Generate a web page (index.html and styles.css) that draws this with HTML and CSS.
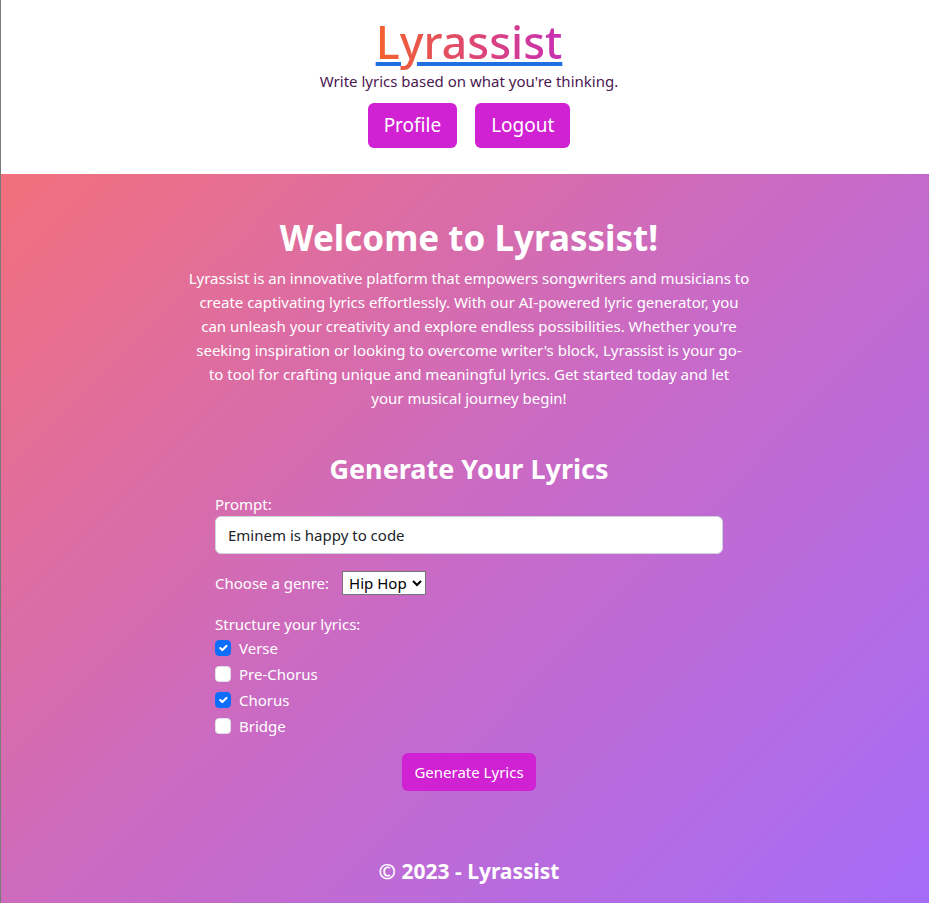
FILE: index.html
```html
<!DOCTYPE html>
<html lang="en">
<head>
<meta charset="utf-8">
<title>Lyrassist</title>
<link rel="stylesheet" href="styles.css">
</head>
<body>
<header class="site-header">
  <h1 class="logo"><a href="#" class="logo-link"><span class="logo-text">Lyrassist</span></a></h1>
  <p class="tagline">Write lyrics based on what you're thinking.</p>
  <nav class="nav">
    <a href="#" class="btn btn-lg">Profile</a>
    <a href="#" class="btn btn-lg">Logout</a>
  </nav>
</header>
<main class="hero">
  <section class="intro">
    <h2 class="intro-title">Welcome to Lyrassist!</h2>
    <p class="intro-text">Lyrassist is an innovative platform that empowers songwriters and musicians to<br>
create captivating lyrics effortlessly. With our AI-powered lyric generator, you<br>
can unleash your creativity and explore endless possibilities. Whether you're<br>
seeking inspiration or looking to overcome writer's block, Lyrassist is your go-<br>to tool for crafting unique and meaningful lyrics. Get started today and let<br>
your musical journey begin!</p>
  </section>
  <section class="generator">
    <h2 class="gen-title">Generate Your Lyrics</h2>
    <form class="gen-form">
      <label class="field-label" for="prompt">Prompt:</label>
      <input class="text-input" id="prompt" type="text" value="Eminem is happy to code">
      <div class="genre-row">
        <label for="genre">Choose a genre:</label>
        <select id="genre" class="genre-select">
          <option>Hip Hop</option>
          <option>Pop</option>
          <option>Rock</option>
        </select>
      </div>
      <div class="structure">
        <div class="structure-label">Structure your lyrics:</div>
        <label class="check"><input type="checkbox" checked><span>Verse</span></label>
        <label class="check"><input type="checkbox"><span>Pre-Chorus</span></label>
        <label class="check"><input type="checkbox" checked><span>Chorus</span></label>
        <label class="check"><input type="checkbox"><span>Bridge</span></label>
      </div>
      <div class="submit-row">
        <button type="button" class="btn btn-md">Generate Lyrics</button>
      </div>
    </form>
  </section>
  <footer class="footer">© 2023 - Lyrassist</footer>
</main>
</body>
</html>
```

FILE: styles.css
```css
* { box-sizing: border-box; }
html, body { height: 100%; }
body {
  margin: 0;
  border-left: 1px solid #7a7a7a;
  font-family: "Noto Sans", "Open Sans", sans-serif;
  display: flex;
  flex-direction: column;
  min-height: 903px;
}
.site-header {
  background: #fff;
  text-align: center;
  padding: 14px 0 25px 8px;
  height: 174px;
}
.logo {
  margin: 0;
  font-size: 45px;
  font-weight: 500;
  line-height: 56px;
}
.logo-link {
  color: #1f6fe0;
  text-decoration: underline;
  text-decoration-thickness: 4px;
  text-underline-offset: 3px;
}
.logo-text {
  background: linear-gradient(90deg, #f4622c, #c82fb4);
  -webkit-background-clip: text;
  background-clip: text;
  color: transparent;
}
.tagline {
  margin: 0;
  color: #4a1750;
  font-size: 15px;
  line-height: 22px;
}
.nav {
  display: flex;
  justify-content: center;
  gap: 18px;
  margin-top: 11px;
}
.btn {
  background: #d021d2;
  color: #fff;
  border: 0;
  border-radius: 6px;
  text-decoration: none;
  font-family: inherit;
  cursor: pointer;
}
.btn-lg {
  font-size: 19px;
  height: 45px;
  line-height: 45px;
  padding: 0 16px;
}
.btn-md {
  font-size: 15px;
  height: 38px;
  padding: 0 12px;
}
.hero {
  flex: 1;
  background: linear-gradient(135deg, #f2707c 0%, #c96ac6 50%, #a56cf8 100%);
  color: #fff;
  padding: 38px 0 0 8px;
  display: flex;
  flex-direction: column;
  align-items: center;
}
.intro { width: 590px; text-align: center; }
.intro-title {
  margin: 0 0 2px;
  font-size: 35px;
  font-weight: 700;
  line-height: 52px;
}
.intro-text {
  margin: 0;
  font-size: 15px;
  line-height: 24px;
}
.generator { width: 508px; margin-top: 39px; }
.gen-title {
  margin: 0 0 4px;
  text-align: center;
  font-size: 27px;
  font-weight: 700;
  line-height: 40px;
}
.gen-form { display: flex; flex-direction: column; }
.field-label { font-size: 15px; line-height: 22px; }
.text-input {
  height: 38px;
  border: 1px solid #ced4da;
  border-radius: 6px;
  padding: 0 12px;
  font-size: 15px;
  font-family: inherit;
  color: #212529;
  margin-top: 1px;
}
.genre-row {
  display: flex;
  align-items: center;
  gap: 13px;
  margin-top: 17px;
  font-size: 15px;
}
.genre-select {
  font-family: inherit;
  font-size: 15px;
  height: 24px;
  border: 1px solid #767676;
  border-radius: 0;
  background: #fff;
  color: #000;
  padding: 0 2px;
}
.structure { margin-top: 18px; font-size: 15px; }
.structure-label { line-height: 22px; }
.check {
  display: flex;
  align-items: center;
  gap: 8px;
  height: 26px;
}
.check input {
  -webkit-appearance: none;
  appearance: none;
  margin: 0;
  width: 16px;
  height: 16px;
  border: 1px solid #dee2e6;
  border-radius: 4px;
  background: #fff;
}
.check input:checked {
  border-color: #0d6efd;
  background: #0d6efd url("data:image/svg+xml,%3csvg xmlns='http://www.w3.org/2000/svg' viewBox='0 0 20 20'%3e%3cpath fill='none' stroke='%23fff' stroke-linecap='round' stroke-linejoin='round' stroke-width='3' d='M6 10l3 3l6-6'/%3e%3c/svg%3e") center / 100% no-repeat;
}
.submit-row { display: flex; justify-content: center; margin-top: 14px; }
.footer {
  margin-top: auto;
  padding-bottom: 18px;
  font-size: 21px;
  font-weight: 700;
}
```
